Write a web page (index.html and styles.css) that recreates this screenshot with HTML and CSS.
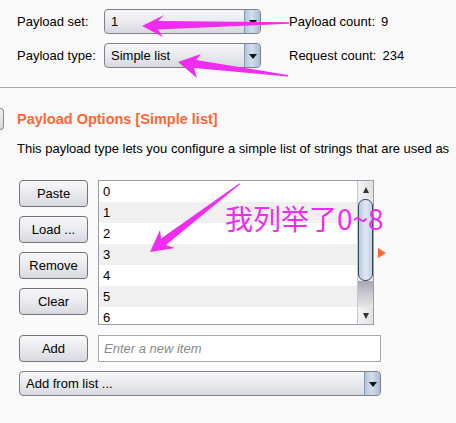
FILE: index.html
```html
<!DOCTYPE html>
<html>
<head>
<meta charset="utf-8">
<link rel="stylesheet" href="styles.css">
</head>
<body>
<div class="config">
  <div class="cfg-row">
    <span class="lbl">Payload set:</span>
    <div class="combo small"><span class="combo-val">1</span><span class="combo-btn"><i class="tri-down"></i></span></div>
    <span class="count">Payload count:<span class="num">9</span></span>
  </div>
  <div class="cfg-row">
    <span class="lbl">Payload type:</span>
    <div class="combo small"><span class="combo-val">Simple list</span><span class="combo-btn"><i class="tri-down"></i></span></div>
    <span class="count">Request count:<span class="num">234</span></span>
  </div>
</div>
<div class="sep"></div>
<div class="section-head">
  <div class="edge-btn"></div>
  <h2 class="title">Payload Options [Simple list]</h2>
</div>
<p class="desc">This payload type lets you configure a simple list of strings that are used as</p>
<div class="list-area">
  <div class="btn-col">
    <button class="btn">Paste</button>
    <button class="btn">Load ...</button>
    <button class="btn">Remove</button>
    <button class="btn">Clear</button>
  </div>
  <div class="listbox">
    <div class="rows">
      <div class="row">0</div>
      <div class="row">1</div>
      <div class="row">2</div>
      <div class="row">3</div>
      <div class="row">4</div>
      <div class="row">5</div>
      <div class="row">6</div>
    </div>
    <div class="vscroll">
      <div class="sb-btn"><i class="tri-up"></i></div>
      <div class="thumb"></div>
      <div class="shade"></div>
      <div class="track"></div>
      <div class="sb-btn"><i class="tri-dn"></i></div>
    </div>
  </div>
  <span class="marker"></span>
</div>
<div class="add-row">
  <button class="btn add">Add</button>
  <div class="input"><span class="ph">Enter a new item</span></div>
</div>
<div class="combo wide"><span class="combo-val">Add from list ...</span><span class="combo-btn"><i class="tri-down"></i></span></div>

<svg class="annot" width="456" height="423" viewBox="0 0 456 423">
  <polygon points="142,26 164,15 158,21 289,22.3 289,23.7 158,29.5 163,37" />
  <polygon points="178,62 201,54 196,60 288,75 288,76.5 194,68 197,78" />
  <polygon points="150,252 160,230 161.1,238.5 239.5,183.2 240,184.2 165.9,244.9 175,248" />
</svg>
<div class="annot-text">我列举了0~8</div>
</body>
</html>
```

FILE: styles.css
```css
body {
  margin: 0;
  width: 456px;
  height: 423px;
  overflow: hidden;
  position: relative;
  background: #fafafa;
  font: 13px "Liberation Sans", Arial, sans-serif;
  color: #000;
}

.config {
  padding: 9px 0 0 17px;
  display: flex;
  flex-direction: column;
  gap: 9px;
}

.cfg-row {
  display: flex;
  align-items: center;
  height: 25px;
}

.lbl {
  width: 87px;
  flex: none;
}

.combo {
  display: flex;
  height: 25px;
  box-sizing: border-box;
  border: 1px solid #7d818b;
  border-radius: 4px;
  background: linear-gradient(#f7f7f9, #e8e9ed 55%, #d7d9df);
  overflow: hidden;
}

.combo.small {
  width: 157px;
  flex: none;
}

.combo.wide {
  margin: 9px 0 0 19px;
  width: 362px;
}

.combo-val {
  flex: 1;
  padding-left: 6px;
  line-height: 23px;
  white-space: nowrap;
}

.combo-btn {
  width: 15px;
  border-left: 1px solid #8797ad;
  background: linear-gradient(90deg, #b4c6db, #d3deeb 45%, #a9bcd3);
  display: flex;
  align-items: center;
  justify-content: center;
}

.tri-down {
  width: 0;
  height: 0;
  border-left: 4px solid transparent;
  border-right: 4px solid transparent;
  border-top: 5px solid #111;
  margin-top: 1px;
}

.count {
  margin-left: 28px;
  white-space: nowrap;
}

.num {
  margin-left: 6px;
}

.sep {
  margin-top: 19px;
  height: 1px;
  background: #a6a6b0;
}

.section-head {
  display: flex;
  align-items: center;
  margin-top: 20px;
  height: 22px;
}

.edge-btn {
  width: 4px;
  height: 22px;
  box-sizing: border-box;
  border: 1px solid #8c8c8c;
  border-left: 0;
  border-radius: 0 4px 4px 0;
  background: linear-gradient(#f2f2f4, #d8d9de);
}

.title {
  margin: 0 0 0 13px;
  font-size: 14.5px;
  font-weight: bold;
  color: #ff6633;
  white-space: nowrap;
}

.desc {
  margin: 10px 0 0 17px;
  line-height: 17px;
  white-space: nowrap;
}

.list-area {
  display: flex;
  margin-top: 23px;
  padding-left: 19px;
  height: 145px;
}

.btn-col {
  display: flex;
  flex-direction: column;
  gap: 9px;
  width: 69px;
  flex: none;
}

.btn {
  height: 27px;
  box-sizing: border-box;
  border: 1px solid #72757c;
  border-radius: 4px;
  background: linear-gradient(#f8f8fa, #e8e9ed 55%, #d9dae0);
  font: inherit;
  color: #000;
  padding: 0;
}

.listbox {
  margin-left: 10px;
  width: 276px;
  flex: none;
  box-sizing: border-box;
  border: 1px solid #9c9ca8;
  display: flex;
  background: #fff;
}

.rows {
  flex: 1;
  overflow: hidden;
}

.row {
  height: 21px;
  line-height: 21px;
  padding-left: 4px;
}

.row:nth-child(even) {
  background: #f0f0f0;
}

.vscroll {
  width: 15px;
  border-left: 1px solid #c6c6cc;
  background: #ececee;
  display: flex;
  flex-direction: column;
}

.sb-btn {
  height: 17px;
  display: flex;
  align-items: center;
  justify-content: center;
  background: linear-gradient(90deg, #f4f4f6, #e1e1e5);
}

.tri-up {
  width: 0;
  height: 0;
  border-left: 3.5px solid transparent;
  border-right: 3.5px solid transparent;
  border-bottom: 6px solid #333;
}

.tri-dn {
  width: 0;
  height: 0;
  border-left: 3.5px solid transparent;
  border-right: 3.5px solid transparent;
  border-top: 6px solid #333;
}

.thumb {
  height: 82px;
  margin-top: 1px;
  box-sizing: border-box;
  border: 1px solid #34455a;
  border-radius: 7px;
  background: linear-gradient(90deg, #b7cbe0, #dfe9f4 50%, #c2d3e6);
}

.shade {
  height: 26px;
  border-radius: 0 0 6px 0;
  background: linear-gradient(#a8a9ae, #c9cacf 50%, #e4e4e7);
}

.track {
  flex: 1;
}

.marker {
  align-self: center;
  margin-left: 4px;
  width: 0;
  height: 0;
  border-top: 5px solid transparent;
  border-bottom: 5px solid transparent;
  border-left: 8px solid #ff6633;
}

.add-row {
  display: flex;
  margin-top: 10px;
  padding-left: 19px;
  gap: 10px;
  height: 27px;
}

.btn.add {
  width: 69px;
}

.input {
  width: 283px;
  box-sizing: border-box;
  border: 1px solid #a8a8a8;
  background: #fff;
  padding-left: 5px;
  display: flex;
  align-items: center;
}

.ph {
  font-style: italic;
  color: #8a8a8a;
  line-height: 16px;
}

.annot {
  position: absolute;
  left: 0;
  top: 0;
  pointer-events: none;
  fill: #f02cf0;
}

.annot-text {
  position: absolute;
  left: 225px;
  top: 204px;
  font: 28px/1 "Noto Sans CJK SC", "Noto Sans", sans-serif;
  color: #f02cf0;
  white-space: nowrap;
}
```
